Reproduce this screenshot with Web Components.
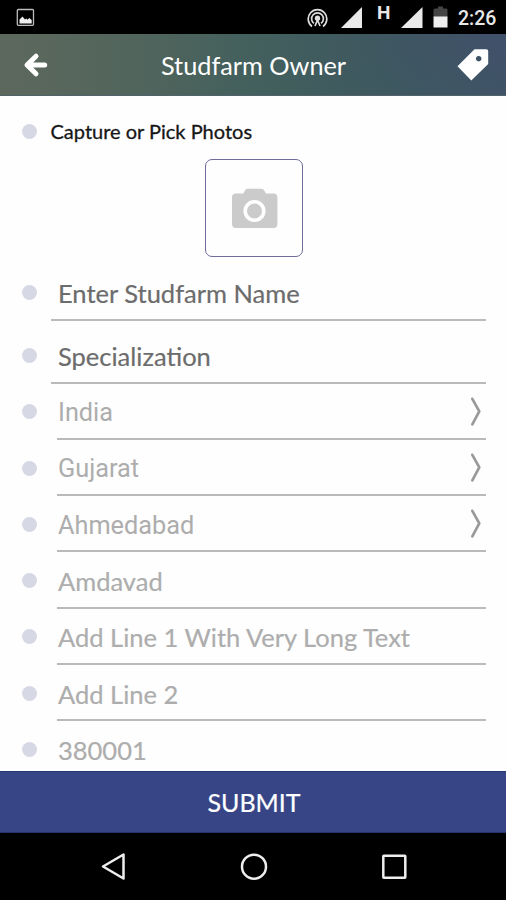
<!DOCTYPE html>
<html lang="en">
<head>
<meta charset="utf-8">
<title>Studfarm Owner</title>
<style>
html,body{margin:0;height:100%;background:#fefefe}
body{font-family:Lato,"Open Sans",sans-serif}
</style>
</head>
<body>
<studfarm-app></studfarm-app>
<script>
function define(name, html) {
  const t = document.createElement('template');
  t.innerHTML = html;
  customElements.define(name, class extends HTMLElement {
    constructor() {
      super();
      this.attachShadow({ mode: 'open' }).append(t.content.cloneNode(true));
    }
  });
}

define('status-bar', `
<style>
:host{display:flex;height:34px;background:#000;color:#e8e8e8;box-sizing:border-box;padding:0 10px 0 16px;justify-content:space-between;align-items:flex-start;font-family:Roboto,sans-serif}
svg{display:block}
.right{display:flex;align-items:flex-start}
.h{font-weight:700;font-size:19px;line-height:20px;width:14px;margin:3px 0 0 14px}
.clock{font-weight:500;font-size:19.5px;line-height:24px;margin:7px 0 0 10px;width:38px;white-space:nowrap}
</style>
<svg width="19" height="34" viewBox="0 0 19 34"><rect x="1.3" y="9.5" width="16.2" height="15.8" rx="1" fill="none" stroke="#bbb" stroke-width="1.3"/><path d="M3.5 23.5v-4l3-3 2.5 3 1.5-1 1 1.2 1.8-1.7 2.4 2v3.5z" fill="#eee"/></svg>
<div class="right">
<svg width="22" height="34" viewBox="0 0 22 34" fill="none" stroke="#ddd" stroke-width="1.7"><path d="M6 26.500A9.300 9.300 0 1 1 17 26.500"/><path d="M7.900 23.400A5.900 5.900 0 1 1 15.100 23.400"/><circle cx="11.500" cy="18.300" r="2.700" fill="#ddd" stroke="none"/><path d="M9 26l2.500-6 2.500 6"/></svg>
<svg style="margin-left:13px" width="22" height="34" viewBox="0 0 22 34"><path d="M0 28L21 7v21z" fill="#e9e9e9"/></svg>
<span class="h">H</span>
<svg style="margin-left:10px" width="22" height="34" viewBox="0 0 22 34"><path d="M0 28L21.500 7v21z" fill="#e9e9e9"/></svg>
<svg style="margin-left:10px" width="15" height="34" viewBox="0 0 15 34"><path d="M.5 17V10q0-1.500 1.500-1.500h3V6.500h5v2h3q1.500 0 1.500 1.500v7z" fill="#444"/><path d="M.5 16.500h14v11H.5z" fill="#eee"/></svg>
<span class="clock">2:26</span>
</div>`);

define('title-bar', `
<style>
:host{display:grid;grid-template-columns:60px 1fr 60px;align-items:start;height:61.500px;box-sizing:border-box;color:#fff;background:linear-gradient(172deg,transparent 55%,rgba(60,100,90,.2)),linear-gradient(90deg,#5d685d 0,#52655c 25%,#43605d 50%,#3e5760 75%,#40506a 100%);border-bottom:1px solid #50636a}
h1{font-weight:400;font-size:25.3px;line-height:30px;margin:16px 0 0 1px;text-align:center;white-space:nowrap}
svg{display:block}
</style>
<svg width="60" height="60" viewBox="0 0 60 60" fill="none" stroke="#fff" stroke-width="5" stroke-linecap="round" stroke-linejoin="round"><path d="M36 22.200L27 31l9 8.800M28 31h16.700" /></svg>
<h1><slot></slot></h1>
<svg width="60" height="60" viewBox="0 0 60 60"><path fill="#fff" fill-rule="evenodd" d="M28.500 15.300H40.300Q42.200 15.300 42.200 17.200V30L25.300 46.500 11.500 32.200ZM32.700 21.900a2.800 2.800 0 1 0 .01 0z"/></svg>`);

define('bullet-dot', `
<style>:host{display:block;width:15px;height:15px;border-radius:50%;background:#d6d8e5}</style>`);

define('photo-picker', `
<style>
:host{display:block;padding:28px 0 0 21.500px}
.label{display:flex;align-items:center;gap:14px;height:15px;font-size:20px;line-height:24px;color:#161616;-webkit-text-stroke:.3px;white-space:nowrap}
.box{width:96px;height:96px;margin:20px 0 0 183px;border:1.500px solid #6d6c9c;border-radius:7px}
svg{display:block}
</style>
<div class="label"><bullet-dot></bullet-dot><span><slot></slot></span></div>
<div class="box"><svg width="97" height="97" viewBox="0 0 97 97"><path fill="#cbcbcb" d="M30 33.500h7.300l1.800-3.200q.7-1.500 2.500-1.500h14q1.800 0 2.500 1.500l1.800 3.200h7.500q4 0 4 4v26.500q0 4-4 4H30q-4 0-4-4V37.500q0-4 4-4z"/><circle cx="48.500" cy="51" r="9.300" fill="#cbcbcb" stroke="#fff" stroke-width="3.600"/></svg></div>`);

define('form-field', `
<style>
:host{display:flex;height:56.250px;box-sizing:border-box;padding:0 20px 0 21.500px;align-items:flex-end;color:#adadad;font-size:25.5px;--inset:20.500px}
:host([wide]){height:63px;color:#6c6c6c;--inset:14.500px}
bullet-dot{margin-bottom:20.500px;flex:none}
.line{flex:1;margin-left:var(--inset);padding-left:calc(21.500px - var(--inset));height:44px;box-sizing:border-box;border-bottom:2px solid #bababa;display:flex;justify-content:space-between;align-items:flex-start;white-space:nowrap}
span{line-height:30px;margin-top:1.500px;-webkit-text-stroke:.2px}
:host([wide]) span{margin-top:1px}
:host([select]) span{font-family:Roboto,sans-serif;-webkit-text-stroke:0;margin-top:2.300px;font-size:25.300px}
svg{display:none}
:host([select]) svg{display:block}
</style>
<bullet-dot></bullet-dot>
<div class="line"><span><slot></slot></span><svg width="16" height="36" viewBox="0 0 16 36"><path d="M2.300 2.800L9.300 15.300 2.300 28.300" fill="none" stroke="#999" stroke-width="2.700" stroke-linecap="round" stroke-linejoin="round"/></svg></div>`);

define('submit-button', `
<style>
:host{display:block;height:62px;flex:none;box-sizing:border-box;background:#374587;border-top:1.500px solid #263776;border-bottom:1px solid #27346b}
button{all:unset;box-sizing:border-box;display:block;width:100%;padding-left:2px;text-align:center;color:#fff;font-size:25px;line-height:61px;white-space:nowrap;-webkit-text-stroke:.2px}
</style>
<button><slot></slot></button>`);

define('nav-bar', `
<style>
:host{display:flex;justify-content:space-between;align-items:flex-start;height:67px;flex:none;box-sizing:border-box;padding:18px 98px 0 99px;background:#000}
svg{display:block;fill:none;stroke:#eee;stroke-width:2.500;stroke-linejoin:round}
</style>
<svg width="28" height="32" viewBox="0 0 28 32"><path d="M4 15.500L24.500 3.500v24z"/></svg>
<svg width="28" height="32" viewBox="0 0 28 32"><circle cx="14" cy="15.700" r="12"/></svg>
<svg width="28" height="32" viewBox="0 0 28 32"><rect x="3.300" y="4.700" width="22" height="22" rx=".5"/></svg>`);

define('studfarm-app', `
<style>
:host{display:flex;flex-direction:column;width:506px;height:900px;overflow:hidden;background:#fefefe}
main{flex:1;min-height:0;overflow:hidden}
status-bar,title-bar{flex:none}
form-field:first-of-type{height:64.200px}
</style>
<status-bar></status-bar>
<title-bar>Studfarm Owner</title-bar>
<main>
<photo-picker>Capture or Pick Photos</photo-picker>
<form-field wide>Enter Studfarm Name</form-field>
<form-field wide>Specialization</form-field>
<form-field select>India</form-field>
<form-field select>Gujarat</form-field>
<form-field select>Ahmedabad</form-field>
<form-field>Amdavad</form-field>
<form-field>Add Line 1 With Very Long Text</form-field>
<form-field>Add Line 2</form-field>
<form-field>380001</form-field>
</main>
<submit-button>SUBMIT</submit-button>
<nav-bar></nav-bar>`);
</script>
</body>
</html>
